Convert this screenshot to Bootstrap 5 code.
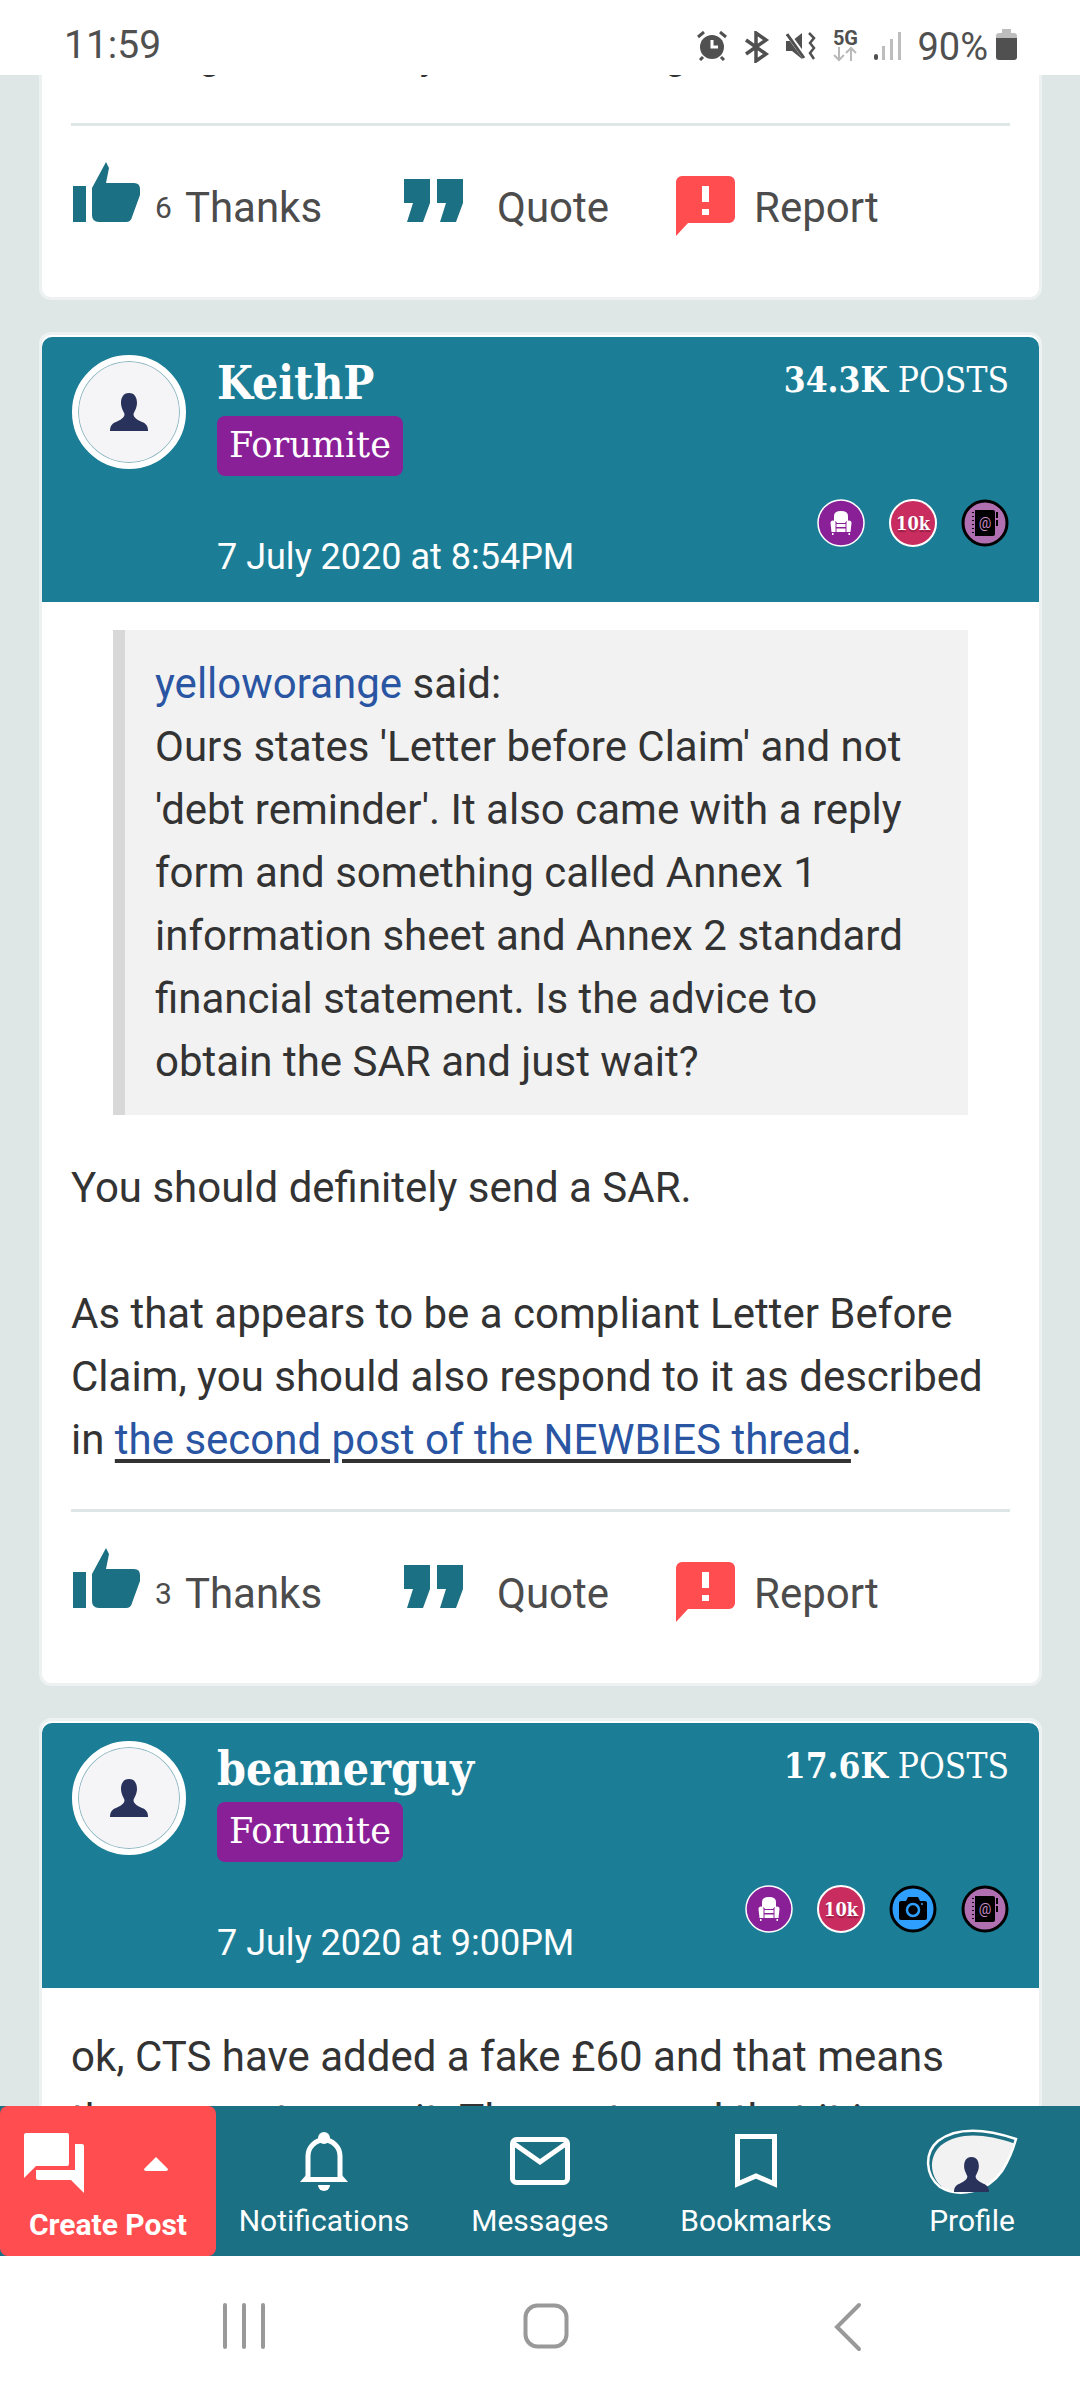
<!DOCTYPE html>
<html lang="en">
<head>
  <meta charset="UTF-8" />
  <meta name="viewport" content="width=device-width, initial-scale=1.0"/>
  <title>Forum thread</title>
  <link href="https://cdn.jsdelivr.net/npm/bootstrap@5.3.0/dist/css/bootstrap.min.css" rel="stylesheet" />
  <style>
    body { margin: 0; background: #fff; font-family: Roboto, "Liberation Sans", sans-serif; color: #333; }
    .phone { width: 1080px; height: 2400px; overflow: hidden; }

    /* status bar */
    .status-bar { height: 75px; flex: none; background: #fff; color: #505050; padding: 26px 63px 0 64px; font-size: 39px; line-height: 1; }
    .status-icons { gap: 16px; margin-left: auto; padding-top: 5px; }
    .five-g { width: 26px; font-size: 20px; font-weight: 700; line-height: 15px; color: #505050; text-align: center; }
    .batt-text { font-size: 38px; margin-left: 16px; margin-top: 2px; }
    .batt-ico { margin-top: 3px; }

    /* posts */
    .feed { flex: 1 1 auto; min-height: 0; overflow: hidden; background: #dee6e6; padding: 0 38px 0 39px; }
    .post { background: #fff; border: 3px solid #eef1f1; border-radius: 12px; margin-bottom: 32px; overflow: hidden; }
    .post-first { margin-top: -103px; }
    .post-head { height: 265px; margin-top: 2px; background: #1c7e96; color: #fff; padding: 0 30px 0 30px; border-radius: 10px 10px 0 0; }
    .avatar { width: 114px; height: 114px; margin-top: 18px; border: 6px solid #fff; background: #f5f5f7; box-shadow: inset 0 0 0 1px #8fb9c4; flex: none; }
    .who { margin-left: 31px; padding-top: 21px; }
    .uname { font-family: "DejaVu Serif", "Liberation Serif", serif; font-stretch: condensed; font-weight: 700; font-size: 46px; line-height: 50px; }
    .rank { display: inline-block; height: 60px; margin-top: 8px; padding: 0 12px; background: #8a2097; border-radius: 8px; font-family: "DejaVu Serif", "Liberation Serif", serif; font-size: 35px; line-height: 59px; }
    .stamp { font-size: 36px; line-height: 44px; margin-top: 59px; }
    .stats { margin-left: auto; padding-top: 21px; }
    .post-count { font-family: "DejaVu Serif", "Liberation Serif", serif; font-stretch: condensed; font-size: 35px; line-height: 44px; }
    .medals { gap: 24px; margin-top: 97px; }
    .medal { width: 48px; height: 48px; flex: none; }
    .ten-k { background: #c92c5f; border: 2px solid #fff; font-family: "DejaVu Serif", serif; font-stretch: condensed; font-weight: 700; font-size: 18px; color: #fff; text-shadow: 0 2px 1px rgba(0,0,0,.25); }

    .post-body { padding: 28px 29px 75px; font-size: 42px; line-height: 63px; }
    .post-top-body { padding-top: 47px; white-space: nowrap; }
    .post-text-only { padding-top: 37px; }
    .quote-box { margin: 0 42px 41px; background: #f2f2f2; border-left: 12px solid #d8d8d8; padding: 22px 30px; }
    .quote-box a, .post-link { color: #2a55a3; text-decoration: none; }
    .post-link { text-decoration: underline; text-decoration-color: #333; text-decoration-thickness: 4px; text-underline-offset: 5px; }
    .rule { height: 3px; background: #dee6e6; margin-top: 38px; margin-bottom: 36px; }
    .actions { height: 60px; padding-left: 1px; color: #4c4c4c; line-height: 40px; }
    .act-thanks { width: 332px; }
    .act-quote { width: 272px; }
    .act-label { margin-bottom: -6px; }
    .act-count { font-size: 30px; margin-left: 15px; margin-right: 13px; }
    .act-quote-label { margin-left: 34px; }
    .act-report-label { margin-left: 19px; }
    .report-ico { margin-bottom: -14px; }

    /* bottom bars */
    .tabbar { height: 150px; flex: none; background: #1c7083; color: #fff; }
    .tab { height: 150px; text-align: center; font-size: 30px; line-height: 37px; }
    .tab-ico { height: 96px; padding-top: 23px; }
    .tab-create { background: #ff4d50; border-radius: 8px; font-weight: 700; }
    .tab-create .tab-ico { padding: 27px 0 0 24px; gap: 60px; }
    .tab-create-label { margin-top: 4px; }
    .sysbar { height: 144px; flex: none; background: #fff; padding: 47px 0 0 223px; }
    .sys-home { margin-left: 258px; }
    .sys-back { margin-left: 265px; margin-top: -1px; }
  </style>
</head>
<body>
  <svg class="d-none">
    <symbol id="i-person" viewBox="0 0 38 38"><path fill="#28325a" d="M19 0C25 0 27 5 27 10C27 15 24 19 23.5 21C23.5 25 28 27 32 29C36 30.5 38 33 38 38H0C0 33 2 30.5 6 29C10 27 14.5 25 14.5 21C14 19 11 15 11 10C11 5 13 0 19 0Z"/></symbol>
    <symbol id="i-thumb" viewBox="0 0 68 60"><path fill="#1b7083" d="M1 24H14V60H1Z"/><path fill="#1b7083" d="M20 26L34 0L37 6L34 21H62Q68 21 68 27V33L60 55Q59 60 54 60H27Q20 60 20 53Z"/></symbol>
    <symbol id="i-quote" viewBox="0 0 59 43"><path fill="#1b7083" d="M0 0H26V24L19 43H3L9 24H0Z"/><path fill="#1b7083" d="M33 0H59V24L52 43H36L42 24H33Z"/></symbol>
    <symbol id="i-report" viewBox="0 0 59 60"><path fill="#ff4d50" d="M6 0H53a6 6 0 0 1 6 6V41a6 6 0 0 1-6 6H12L0 60V6a6 6 0 0 1 6-6Z"/><path fill="#fff" d="M26 10H33V26H26ZM26 33H33V39H26Z"/></symbol>
    <symbol id="i-chair" viewBox="0 0 48 48"><circle cx="24" cy="24" r="23" fill="#8a2097" stroke="#fff" stroke-width="1.5"/><path fill="#fff" d="M17 23V17Q17 12 24 12Q31 12 31 17V23Q29.500 21 28 24H20Q18.500 21 17 23Z"/><path fill="#fff" d="M13.500 24Q13.500 21.500 16 21.500Q18.500 21.500 18.500 24V33H14.500ZM29.500 24Q29.500 21.500 32 21.500Q34.500 21.500 34.500 24L33.500 33H29.500Z"/><path fill="#fff" d="M19.500 25H28.500V28H19.500ZM19.500 29.500H28.500V33H19.500ZM15 34H16.500V36H15ZM31.500 34H33V36H31.500Z"/></symbol>
    <symbol id="i-book" viewBox="0 0 48 48"><circle cx="24" cy="24" r="22" fill="#b06fb0" stroke="#000" stroke-width="3"/><path fill="#000" d="M14 11H32Q34 11 34 13V35Q34 37 32 37H14Z"/><path fill="#000" d="M35 13H37V19H35ZM35 21H37V27H35ZM11 13H13V14H11ZM11 17H13V18H11ZM11 21H13V22H11ZM11 25H13V26H11ZM11 29H13V30H11ZM11 33H13V34H11Z"/><text x="24" y="29" text-anchor="middle" fill="#c98ac9" font-family="Roboto, sans-serif" font-size="14">@</text></symbol>
    <symbol id="i-camera" viewBox="0 0 48 48"><circle cx="24" cy="24" r="22" fill="#2f9fff" stroke="#000" stroke-width="3"/><path fill="#000" d="M12 16H17L19 12H29L31 16H36Q38 16 38 18V33Q38 35 36 35H12Q10 35 10 33V18Q10 16 12 16Z"/><circle cx="24" cy="25" r="6" fill="none" stroke="#2f9fff" stroke-width="2.500"/><circle cx="33" cy="19" r="1" fill="#2f9fff"/></symbol>
  </svg>

  <div class="phone d-flex flex-column">
    <div class="status-bar d-flex">
      <span>11:59</span>
      <div class="status-icons d-flex align-items-start">
        <svg width="30" height="30" viewBox="0 0 30 30"><circle cx="15" cy="16" r="12" fill="#505050"/><path d="M15 9V16H21" fill="none" stroke="#fff" stroke-width="3"/><path d="M1 6L7 1M29 6L23 1M6 26L3 29M24 26L27 29" stroke="#505050" stroke-width="3"/></svg>
        <svg width="27" height="32" viewBox="0 0 27 32"><path d="M3 9L23 23L13 30V2L23 9L3 23" fill="none" stroke="#505050" stroke-width="3.500"/></svg>
        <svg width="30" height="30" viewBox="0 0 30 30"><path fill="#505050" d="M0 10H6L16 2V28L6 20H0Z"/><path d="M1 2L20 28" stroke="#fff" stroke-width="5"/><path d="M1 3L18 27" stroke="#505050" stroke-width="3"/><path d="M23 2L28 7L24 12L28 17L24 22L28 28" fill="none" stroke="#505050" stroke-width="2.500"/></svg>
        <div class="five-g">5G<svg class="d-block" width="26" height="16" viewBox="0 0 26 16"><path d="M7 1V14M2 9L7 14L12 9M19 15V2M14 7L19 2L24 7" fill="none" stroke="#b9b9b9" stroke-width="2"/></svg></div>
        <svg width="27" height="30" viewBox="0 0 27 30"><rect x="0" y="23" width="4" height="6" rx="2" fill="#505050"/><rect x="8" y="15" width="3" height="14" fill="#bdbdbd"/><rect x="16" y="8" width="3" height="21" fill="#bdbdbd"/><rect x="24" y="1" width="3" height="28" fill="#bdbdbd"/></svg>
      </div>
      <span class="batt-text">90%</span>
      <svg class="ms-2 batt-ico" width="21" height="32" viewBox="0 0 21 32"><path fill="#bdbdbd" d="M6 0H15V4H18Q21 4 21 7V10H0V7Q0 4 3 4H6Z"/><path fill="#505050" d="M0 9H21V28Q21 31 18 31H3Q0 31 0 28Z"/></svg>
    </div>

    <div class="feed">
      <div class="card post post-first">
        <div class="post-body post-top-body">
          <div>Those get letters by email, then go on</div>
          <div class="rule"></div>
          <div class="actions d-flex align-items-end">
            <div class="act-thanks d-flex align-items-end"><svg width="68" height="60"><use href="#i-thumb"/></svg><span class="act-count act-label">6</span><span class="act-label">Thanks</span></div>
            <div class="act-quote d-flex align-items-end"><svg width="59" height="43"><use href="#i-quote"/></svg><span class="act-label act-quote-label">Quote</span></div>
            <div class="d-flex align-items-end"><svg class="report-ico" width="59" height="60"><use href="#i-report"/></svg><span class="act-label act-report-label">Report</span></div>
          </div>
        </div>
      </div>

      <div class="card post">
        <div class="post-head d-flex">
          <div class="avatar rounded-circle d-flex align-items-center justify-content-center"><svg width="38" height="38"><use href="#i-person"/></svg></div>
          <div class="who">
            <div class="uname">KeithP</div>
            <div class="rank">Forumite</div>
            <div class="stamp">7 July 2020 at 8:54PM</div>
          </div>
          <div class="stats d-flex flex-column align-items-end">
            <div class="post-count"><b>34.3K</b> POSTS</div>
            <div class="medals d-flex">
              <svg class="medal"><use href="#i-chair"/></svg>
              <div class="medal ten-k rounded-circle d-flex align-items-center justify-content-center">10k</div>
              <svg class="medal"><use href="#i-book"/></svg>
            </div>
          </div>
        </div>
        <div class="post-body">
          <div class="quote-box"><a href="#">yelloworange</a> said:<br>Ours states 'Letter before Claim' and not 'debt reminder'. It also came with a reply form and something called Annex 1 information sheet and Annex 2 standard financial statement. Is the advice to obtain the SAR and just wait?</div>
          <div>You should definitely send a SAR.<br><br>As that appears to be a compliant Letter Before Claim, you should also respond to it as described in <a class="post-link" href="#">the second post of the NEWBIES thread</a>.</div>
          <div class="rule"></div>
          <div class="actions d-flex align-items-end">
            <div class="act-thanks d-flex align-items-end"><svg width="68" height="60"><use href="#i-thumb"/></svg><span class="act-count act-label">3</span><span class="act-label">Thanks</span></div>
            <div class="act-quote d-flex align-items-end"><svg width="59" height="43"><use href="#i-quote"/></svg><span class="act-label act-quote-label">Quote</span></div>
            <div class="d-flex align-items-end"><svg class="report-ico" width="59" height="60"><use href="#i-report"/></svg><span class="act-label act-report-label">Report</span></div>
          </div>
        </div>
      </div>

      <div class="card post">
        <div class="post-head d-flex">
          <div class="avatar rounded-circle d-flex align-items-center justify-content-center"><svg width="38" height="38"><use href="#i-person"/></svg></div>
          <div class="who">
            <div class="uname">beamerguy</div>
            <div class="rank">Forumite</div>
            <div class="stamp">7 July 2020 at 9:00PM</div>
          </div>
          <div class="stats d-flex flex-column align-items-end">
            <div class="post-count"><b>17.6K</b> POSTS</div>
            <div class="medals d-flex">
              <svg class="medal"><use href="#i-chair"/></svg>
              <div class="medal ten-k rounded-circle d-flex align-items-center justify-content-center">10k</div>
              <svg class="medal"><use href="#i-camera"/></svg>
              <svg class="medal"><use href="#i-book"/></svg>
            </div>
          </div>
        </div>
        <div class="post-body post-text-only">ok, CTS have added a fake £60 and that means they cannot agree it. The costs and that it is</div>
      </div>
    </div>

    <div class="tabbar row g-0">
      <div class="col tab tab-create">
        <div class="tab-ico d-flex align-items-start">
          <svg width="60" height="60" viewBox="0 0 60 60"><path fill="#fff" d="M2 0H43a2 2 0 0 1 2 2V31a2 2 0 0 1-2 2H12L0 45V2A2 2 0 0 1 2 0Z"/><path fill="#fff" d="M51 11H58a2 2 0 0 1 2 2V60L47 47H14a2 2 0 0 1-2-2V37H51Z"/></svg>
          <svg class="mt-4" width="24" height="14" viewBox="0 0 24 14"><path fill="#fff" d="M12 0L24 12Q24 14 22 14H2Q0 14 0 12Z"/></svg>
        </div>
        <div class="tab-create-label">Create Post</div>
      </div>
      <div class="col tab">
        <div class="tab-ico"><svg width="64" height="64" viewBox="0 0 64 64"><circle cx="32" cy="9" r="6" fill="#fff"/><path d="M16 50V27a16 16 0 0 1 32 0V50" fill="none" stroke="#fff" stroke-width="5"/><path fill="#fff" d="M8 53L15 45V48H49V45L56 53Z"/><path fill="#fff" d="M26 56H38a6 6 0 0 1-12 0Z"/></svg></div>
        <div>Notifications</div>
      </div>
      <div class="col tab">
        <div class="tab-ico"><svg width="64" height="64" viewBox="0 0 64 64"><rect x="4.500" y="10.500" width="55" height="43" rx="4" fill="none" stroke="#fff" stroke-width="5"/><path d="M5 14L32 33L59 14" fill="none" stroke="#fff" stroke-width="5"/></svg></div>
        <div>Messages</div>
      </div>
      <div class="col tab">
        <div class="tab-ico"><svg width="64" height="64" viewBox="0 0 64 64"><path d="M13.500 7.500H50.500V55L32 47L13.500 55Z" fill="none" stroke="#fff" stroke-width="5"/></svg></div>
        <div>Bookmarks</div>
      </div>
      <div class="col tab">
        <div class="tab-ico"><svg width="92" height="68" viewBox="0 0 92 68"><path transform="translate(4 5) scale(.93)" d="M90 10C60 0 32 -3 12 12C-2 24 -1 46 14 58C34 70 62 62 76 42Q85 28 90 10Z" fill="#f2f2f2"/><path d="M90 10C60 0 32 -3 12 12C-2 24 -1 46 14 58C34 70 62 62 76 42Q85 28 90 10Z" fill="none" stroke="#fff" stroke-width="2.500"/><path transform="translate(28 28) scale(.92)" fill="#28325a" d="M19 0C25 0 27 5 27 10C27 15 24 19 23.5 21C23.5 25 28 27 32 29C36 30.5 38 33 38 38H0C0 33 2 30.5 6 29C10 27 14.500 25 14.500 21C14 19 11 15 11 10C11 5 13 0 19 0Z"/></svg></div>
        <div>Profile</div>
      </div>
    </div>

    <div class="sysbar d-flex align-items-start">
      <svg width="42" height="46" viewBox="0 0 42 46"><path d="M2 2V44M21 2V44M40 2V44" stroke="#999" stroke-width="4" stroke-linecap="round"/></svg>
      <svg class="sys-home" width="46" height="46" viewBox="0 0 46 46"><rect x="2.500" y="2.500" width="41" height="41" rx="12" fill="none" stroke="#999" stroke-width="4"/></svg>
      <svg class="sys-back" width="28" height="50" viewBox="0 0 28 50"><path d="M25 3L3 25L25 47" fill="none" stroke="#999" stroke-width="4" stroke-linecap="round"/></svg>
    </div>
  </div>

  <script src="https://cdn.jsdelivr.net/npm/bootstrap@5.3.0/dist/js/bootstrap.bundle.min.js"></script>
</body>
</html>
